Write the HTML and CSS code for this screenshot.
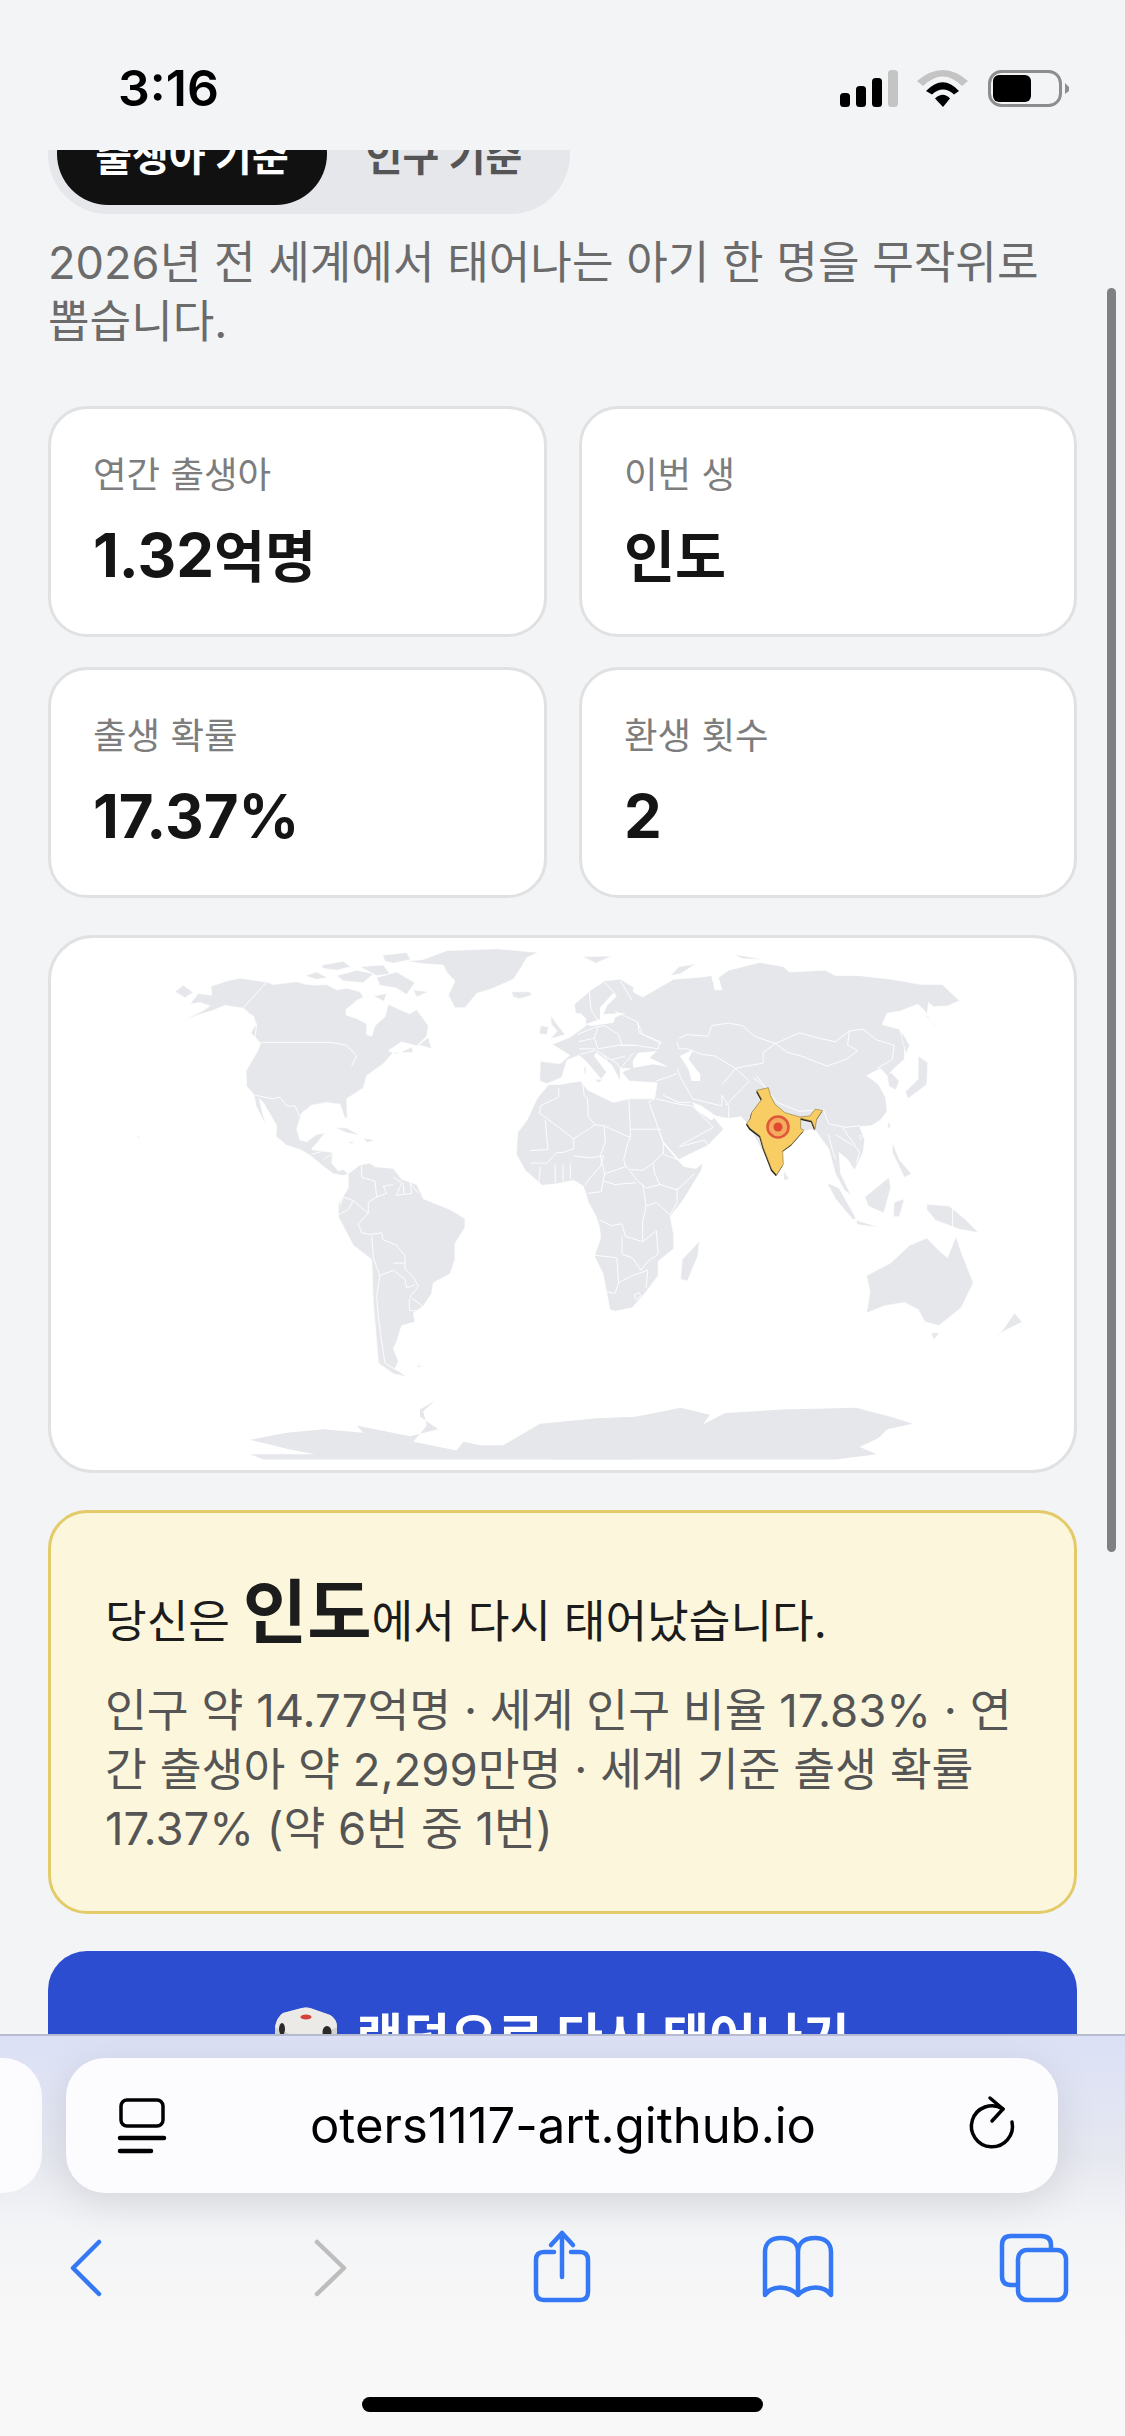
FILE: index.html
```html
<!DOCTYPE html>
<html lang="ko">

<head>
    <meta charset="UTF-8">
    <meta name="viewport" content="width=device-width, initial-scale=1.0">
    <title>랜덤 환생</title>
    <link rel="stylesheet" href="styles.css">
</head>

<body>
    <div class="phone">
        <!-- status bar -->
        <div class="statusbar">
            <span class="clock">3:16</span>
            <svg class="status-icons" viewBox="830 60 245 55">
                <rect x="840" y="93" width="10" height="14" rx="3.500" fill="#000" />
                <rect x="856" y="86" width="10" height="21" rx="3.500" fill="#000" />
                <rect x="872" y="78" width="10" height="29" rx="3.500" fill="#000" />
                <rect x="888" y="70" width="10" height="37" rx="3.500" fill="#c4c4c4" />
                <path d="M917 81Q943 59 968 81L962 86Q943 67 923 86Z" fill="#c4c4c4" />
                <path d="M926 91Q943 73.500 959 91L954 94.500Q943 84.500 932 94.500Z" fill="#000" />
                <path d="M935 98.500Q943 91 950 98.500L943 107Z" fill="#000" />
                <rect x="989.500" y="71.500" width="71" height="34" rx="12" fill="none" stroke="#8d8d8d" stroke-width="3" />
                <rect x="993" y="75" width="38" height="27" rx="6" fill="#000" />
                <path d="M1065 83L1069 87V91L1065 94Z" fill="#8d8d8d" />
            </svg>
        </div>

        <main class="content">
            <div class="tabs">
                <button class="tab active">출생아 기준</button>
                <button class="tab">인구 기준</button>
            </div>
            <p class="desc">2026년 전 세계에서 태어나는 아기 한 명을 무작위로 뽑습니다.</p>

            <div class="stats">
                <div class="stat">
                    <div class="stat-label">연간 출생아</div>
                    <div class="stat-value">1.32<span class="ko">억명</span></div>
                </div>
                <div class="stat">
                    <div class="stat-label">이번 생</div>
                    <div class="stat-value"><span class="ko">인도</span></div>
                </div>
                <div class="stat">
                    <div class="stat-label">출생 확률</div>
                    <div class="stat-value">17.37%</div>
                </div>
                <div class="stat">
                    <div class="stat-label">환생 횟수</div>
                    <div class="stat-value">2</div>
                </div>
            </div>

            <div class="map-card">
                <svg class="map" viewBox="51 937 1023 532">
                    <!-- americas, traced on a 3x / 2.8x grid -->
                    <g transform="translate(130 930) scale(.3333 .3571)">
                        <path class="land" d="M130 265L175 245 215 232 250 222 285 208 338 216 355 228 372 240 378 262 362 285 378 300 392 315 385 332 365 365 348 392 350 435 372 458 378 490 408 545 395 500 388 470 400 480 440 545 438 575 470 600 510 612 540 628 575 655 610 680 640 685 655 680 640 668 625 672 605 650 608 620 565 615 545 612 560 595 585 565 560 570 530 590 510 585 500 555 515 510 545 488 590 480 630 485 645 525 652 520 650 470 700 440 710 405 760 372 790 340 850 340 845 325 800 345 775 335 815 310 860 322 890 295 895 265 860 220 840 232 820 225 775 205 765 240 735 265 725 295 710 290 710 260 680 245 648 235 648 220 680 195 700 185 690 170 650 160 620 165 590 150 560 152 530 150 500 142 430 150 410 143 330 132 290 140 243 155 245 180 205 175 180 205 210 200 240 210 215 225Z" />
                        <path class="land" d="M135 170L160 152 190 172 165 187Z" />
                        <path class="land" d="M525 125L560 115 592 130 560 136Z" />
                        <path class="land" d="M575 95L640 85 662 100 620 110 580 105Z" />
                        <path class="land" d="M620 125L680 110 730 120 700 145 640 140Z" />
                        <path class="land" d="M690 100L760 95 780 120 740 125Z" />
                        <path class="land" d="M758 68L830 60 842 80 790 90 765 85Z" />
                        <path class="land" d="M740 130L800 115 855 145 830 178 800 160 750 152Z" />
                        <path class="land" d="M730 182L770 175 762 197Z" />
                        <path class="land" d="M850 165L895 170 860 185Z" />
                        <path class="land" d="M830 85L880 80 950 55 1100 50 1225 60 1190 75 1175 100 1150 135 1090 160 1040 175 1005 215 975 215 955 180 975 140 950 115 940 95 880 92Z" />
                        <path class="land" d="M1145 170L1200 170 1205 180 1170 190 1150 185Z" />
                        <path class="land" d="M1360 72L1445 70 1400 90Z" />
                        <path class="land" d="M865 320L895 298 905 330 880 322Z" />
                        <path class="land" d="M615 550L650 552 690 572 650 565Z" />
                        <path class="land" d="M700 580L735 585 712 593Z" />
                        <path class="land" d="M655 590L675 590 665 596Z" />
                        <path class="land" d="M22 572L30 578 24 582Z" />
                        <path class="land" d="M655 680L690 655 720 650 735 660 790 665 815 695 860 710 880 750 960 780 1005 805 1005 830 975 875 975 920 960 960 910 985 905 1015 880 1050 850 1070 855 1095 815 1105 800 1150 790 1170 805 1205 795 1225 830 1248 790 1240 745 1210 740 1150 730 1040 725 920 670 880 625 800 625 765 655 720Z" />
                        <path class="land" d="M858 1216L878 1216 868 1222Z" />
                        <path class="ice" d="M360 1425L470 1405 580 1395 700 1405 680 1385 840 1415 925 1395 870 1360 870 1340 915 1315 880 1345 890 1385 850 1430 980 1455 1000 1430 1050 1440 1120 1440 1230 1380 1400 1365 1510 1362 1510 1480 400 1480 360 1465 555 1465 480 1452Z" />
                        <path class="border" d="M410 143L340 215 380 260 375 300" />
                        <path class="border" d="M395 312L600 312 650 320 680 350 665 378" />
                        <path class="border" d="M375 460L430 470 450 465 470 490 495 490 510 520" />
                        <path class="border" d="M545 608L570 592M545 625L575 618M580 640L608 622" />
                        <path class="border" d="M695 655L695 690 735 700 740 745 770 735 760 715 790 710" />
                        <path class="border" d="M790 690L815 705 800 740 845 735 840 705 865 735M820 705L822 737" />
                        <path class="border" d="M740 745L715 760 715 790 685 820 695 845 720 850 755 845 760 865 800 880 825 910 825 945 850 970 865 995 840 1025 878 1050" />
                        <path class="border" d="M630 770L640 745 670 755 695 775 715 790M625 795L655 780 670 755" />
                        <path class="border" d="M725 855L730 915 750 965 790 950 825 975 830 1000 855 990M790 930L825 930" />
                        <path class="border" d="M750 965L740 1020 745 1080 755 1150 765 1210 800 1230" />
                        <path class="border" d="M838 1030L838 1062 870 1065 878 1050" />
                    </g>
                    <!-- old world -->
                    <g transform="translate(560 930) scale(.3444 .3571)">
                        <path class="land" d="M-59 420L-57 365 0 372 28 348 -10 325 -23 318 30 297 54 280 75 265 75 245 60 232 45 230 42 205 90 165 130 140 175 135 215 158 212 170 240 185 285 160 330 135 400 130 440 125 450 165 470 165 460 130 490 110 580 88 650 100 665 115 770 110 800 125 870 125 960 135 1050 150 1110 150 1160 195 1125 210 1085 212 1070 200 1065 240 1110 290 1085 265 1060 225 1040 205 985 225 950 230 935 262 985 275 1000 310 1000 360 975 380 960 395 985 420 975 445 955 435 950 405 930 385 890 405 905 415 925 430 945 465 950 505 930 530 905 545 870 548 885 585 880 620 855 670 835 640 810 620 815 680 845 740 825 725 800 680 780 610 765 590 740 555 705 560 640 620 630 680 590 620 545 540 525 520 490 525 452 518 410 490 385 480 395 500 425 520 440 530 447 522 475 555 430 600 345 640 300 590 270 510 258 478 275 470 282 425 200 420 180 395 205 385 175 385 175 420 150 375 105 340 100 350 135 395 120 415 75 365 55 348 20 362 5 410 -38 428Z" />
                        <path class="sea" d="M227 341L281 336 261 355 315 381 271 373 213 383 211 364Z" />
                        <path class="sea" d="M348 350L387 331 373 359 407 401 407 420 382 420 373 387Z" />
                        <path class="sea" d="M73 261L116 247 116 215 155 173 165 182 136 210 126 233 189 229 160 243 155 257 92 266Z" />
                        <path class="sea" d="M320 100L390 92 425 120 350 125 318 125Z" />
                        <path class="land" d="M-33 430L0 430 60 420 80 445 155 480 200 470 275 470 258 478 300 595 340 640 360 660 395 665 415 650 410 670 360 750 320 800 330 850 330 890 285 925 285 965 250 1010 210 1055 160 1065 145 1060 125 960 100 910 118 860 115 830 105 800 83 760 68 715 40 698 -9 708 -52 712 -101 670 -127 625 -123 565 -96 530 -67 470Z" />
                        <path class="land" d="M-28 235L-8 262 15 290 -28 302 -8 280 -25 262Z" />
                        <path class="land" d="M-57 265L-33 268 -38 290 -60 288Z" />
                        <path class="land" d="M405 868L400 910 370 980 350 975 355 920Z" />
                        <path class="land" d="M65 72L150 70 105 90Z" />
                        <path class="land" d="M320 125L345 100 395 92 350 120Z" />
                        <path class="land" d="M505 65L590 80 530 78Z" />
                        <path class="land" d="M70 380L76 380 74 402 70 400Z" />
                        <path class="land" d="M100 415L125 415 112 425Z" />
                        <path class="land" d="M650 670L665 695 650 698Z" />
                        <path class="land" d="M955 530L960 550 950 552Z" />
                        <path class="land" d="M870 572L882 575 872 585Z" />
                        <path class="land" d="M990 278L1015 320 1005 345 995 310Z" />
                        <path class="land" d="M1040 350L1068 368 1065 430 1010 470 1003 450 1040 415Z" />
                        <path class="land" d="M775 705L810 720 860 805 850 808 800 750Z" />
                        <path class="land" d="M860 810L930 830 862 822Z" />
                        <path class="land" d="M885 745L955 690 960 720 940 790 895 770Z" />
                        <path class="land" d="M970 760L1000 750 985 800 968 800Z" />
                        <path class="land" d="M965 590L985 640 1020 680 1000 690 965 620Z" />
                        <path class="land" d="M1065 765L1130 770 1180 810 1215 845 1160 835 1090 810 1065 780Z" />
                        <path class="land" d="M890 965L960 930 1015 880 1065 860 1095 890 1125 915 1150 855 1165 900 1200 985 1165 1055 1100 1105 1060 1095 1040 1060 1000 1040 940 1050 890 1070 900 1010Z" />
                        <path class="land" d="M1078 1125L1102 1125 1085 1145Z" />
                        <path class="land" d="M1320 1070L1342 1095 1290 1120 1215 1172 1280 1125Z" />
                        <path class="ice" d="M-20 1378L100 1365 220 1360 350 1335 435 1355 415 1382 480 1350 650 1340 860 1335 960 1360 1025 1380 950 1395 925 1420 870 1445 920 1465 800 1480 -20 1480Z" />
                        <path class="border" d="M-4 440L-4 465 -57 490 -59 510 40 582 102 543 127 545 195 575 205 575M-43 530L-35 612 -86 615M40 582L40 610 10 620 -9 620 -38 650 -86 650" />
                        <path class="border" d="M65 420L70 460 80 470 82 520 102 543M200 470L205 575 195 600 185 640 190 660 130 680M205 555L295 555" />
                        <path class="border" d="M40 630L88 635 127 630 117 660 88 690 73 712M127 545L132 590 117 630 130 680 125 700" />
                        <path class="border" d="M190 655L225 700 250 720 290 710 340 725 390 680M300 620L270 650 275 680 290 710M270 650L240 670 205 668M300 595L300 625 340 640" />
                        <path class="border" d="M80 735L120 730 125 700 160 710 220 705M240 710L250 770 240 815 240 870 190 855 180 820 150 825 115 810M250 770L280 760 320 795 340 760 340 720" />
                        <path class="border" d="M100 908L165 915 170 985 160 1015 135 1010M180 855L180 905 210 915 235 950 255 925 285 905 280 840 240 870M170 985L210 965 255 950 250 1000" />
                        <path class="border" d="M215 1020L230 1012 235 1022 222 1032Z" />
                        <path class="border" d="M-57 660L-62 710M-14 655L-14 705M9 655L9 700M30 650L30 695" />
                        <path class="border" d="M85 170L90 220 110 250M130 145L160 175M175 140L210 195" />
                        <path class="border" d="M160 225L225 255 230 285 290 310 285 330 220 320 180 320 170 290M225 255L240 290 295 315" />
                        <path class="border" d="M50 290L100 270 130 265 170 290M55 310L100 300 110 330 170 320 220 320M100 300L110 270M55 330L100 330 130 350 165 370 175 385 215 340M60 345L100 335M125 345L150 385M150 360L190 350" />
                        <path class="border" d="M345 300L370 290 430 295 440 265 490 258 530 265 565 295 625 315M340 310L345 330 370 330 410 345 450 350 510 385 530 380 590 370 590 340 625 315" />
                        <path class="border" d="M625 315L660 340 700 350 775 378 830 360 865 335 835 320 840 280 880 275 920 305 970 320 965 360 920 385M625 315L695 285 750 300 800 310 840 280" />
                        <path class="border" d="M340 385L350 410 385 470 470 490 470 460 490 490 490 525M470 430L510 385 550 420 480 490M280 420L340 400M300 460L345 480 380 480" />
                        <path class="border" d="M280 470L345 485 385 490 445 550 350 600M345 605L420 585 430 600" />
                        <path class="border" d="M560 410L600 440M570 405L630 480 695 505 765 500 780 540 830 550 870 545M780 570L790 610 800 640M820 550L870 620 860 650M800 570L850 600" />
                        <path class="border" d="M955 400L985 385M1140 775L1140 835" />
                    </g>
                    <!-- india, traced on a 3x grid -->
                    <g transform="translate(700 1040) scale(.3333)">
                        <path class="india-edge" d="M170 148L205 140 212 165 225 190 255 215 300 228 330 225 345 205 368 208 350 235 345 265 335 240 302 232 302 262 312 268 275 310 248 330 250 370 230 402 215 385 190 320 180 285 150 262 140 247 150 235 155 215 185 175Z" />
                        <path class="india" d="M170 148L205 140 212 165 225 190 255 215 300 228 330 225 345 205 368 208 350 235 345 265 335 240 302 232 302 262 312 268 275 310 248 330 250 370 230 402 215 385 190 320 180 285 150 262 140 247 150 235 155 215 185 175Z" />
                    </g>
                    <circle class="pin-ring" cx="778" cy="1126" r="10.5" />
                    <circle class="pin-dot" cx="778" cy="1126" r="4.5" />
                </svg>
            </div>

            <div class="result">
                <p class="result-title">당신은 <strong>인도</strong>에서 다시 태어났습니다.</p>
                <p class="result-desc">인구 약 14.77억명 · 세계 인구 비율 17.83% · 연간 출생아 약 2,299만명 · 세계 기준 출생 확률 17.37% (약 6번 중 1번)</p>
            </div>

            <button class="reborn">
                <svg class="dice" viewBox="0 0 62 62">
                    <path d="M0 20Q2 10 8 6L27 1Q31 0 35 1L55 8Q62 12 62 20V62H0Z" fill="#d3d2ce" />
                    <path d="M0 20Q2 10 8 6L27 1Q31 0 35 1L55 8Q62 12 62 20L38 32Q31 35 24 32Z" fill="#ebeae7" />
                    <ellipse cx="31" cy="10" rx="5.500" ry="2.500" fill="#d8403a" />
                    <ellipse cx="7" cy="22" rx="3" ry="6" fill="#2a2a2a" />
                    <ellipse cx="52" cy="25" rx="4.500" ry="6" fill="#2a2a2a" />
                </svg>
                랜덤으로 다시 태어나기
            </button>
        </main>

        <!-- safari bottom bar -->
        <div class="browserbar">
            <div class="address-row">
                <div class="prev-tab"></div>
                <div class="address">
                    <svg class="addr-left" viewBox="114 2090 62 72">
                        <rect x="121" y="2100" width="42" height="26" rx="6" fill="none" stroke="#000" stroke-width="3.500" />
                        <path d="M120 2138H164M120 2151H151" stroke="#000" stroke-width="4.500" stroke-linecap="round" fill="none" />
                    </svg>
                    <span class="url">oters1117-art.github.io</span>
                    <svg class="addr-right" viewBox="950 2090 74 72">
                        <path d="M1003 2109A20.500 20.500 0 1 0 1012 2122" fill="none" stroke="#000" stroke-width="3.500" stroke-linecap="round" />
                        <path d="M990 2098L1003 2109 992 2121" fill="none" stroke="#000" stroke-width="3.500" stroke-linecap="round" stroke-linejoin="round" />
                    </svg>
                </div>
            </div>
            <div class="toolbar">
                <svg class="tool" viewBox="46 2228 80 80">
                    <path class="tool-line" d="M99 2242L73 2268 99 2294" />
                </svg>
                <svg class="tool" viewBox="283 2228 80 80">
                    <path class="tool-line off" d="M317 2242L344 2268 317 2294" />
                </svg>
                <svg class="tool" viewBox="520 2228 80 80">
                    <path class="tool-line" d="M554 2252H544Q536 2252 536 2260V2292Q536 2300 544 2300H580Q588 2300 588 2292V2260Q588 2252 580 2252H571" />
                    <path class="tool-line" d="M562 2277V2233M551 2245L562 2233 573 2245" />
                </svg>
                <svg class="tool" viewBox="757 2228 80 80">
                    <path class="tool-line" d="M798 2295V2252C798 2243 792 2238 781 2238 771 2238 765 2243 765 2252V2295C772 2285 788 2285 798 2295 808 2285 824 2285 831 2295V2252C831 2243 825 2238 815 2238 804 2238 798 2243 798 2252" />
                </svg>
                <svg class="tool" viewBox="994 2228 80 80">
                    <path class="tool-line" d="M1017 2285H1011Q1002 2285 1002 2276V2245Q1002 2236 1011 2236H1041Q1051 2236 1051 2245V2250" />
                    <rect class="tool-line" x="1018" y="2250" width="48" height="50" rx="9" />
                </svg>
            </div>
            <div class="home-indicator"></div>
        </div>

        <div class="scrollbar"></div>
    </div>
</body>

</html>
```

FILE: styles.css
```css
* {
    margin: 0;
    padding: 0;
    box-sizing: border-box;
}

body {
    width: 1125px;
    height: 2436px;
    overflow: hidden;
    background: #f3f4f6;
    font-family: Inter, "Noto Sans CJK KR", sans-serif;
    color: #111;
}

.phone {
    position: relative;
    width: 1125px;
    height: 2436px;
    display: flex;
    flex-direction: column;
}

.statusbar {
    height: 150px;
    flex: none;
    display: flex;
    justify-content: space-between;
    align-items: flex-start;
    padding-left: 118px;
    padding-right: 50px;
    padding-top: 60px;
}

.clock {
    font-size: 50px;
    line-height: 56px;
    font-weight: 600;
    color: #000;
}

.status-icons {
    width: 245px;
    height: 55px;
}

/* page content */
.content {
    height: 1884px;
    flex: none;
    overflow: hidden;
    padding: 0 48px;
}

.tabs {
    display: flex;
    width: 522px;
    height: 120px;
    margin-top: -56px;
    padding: 9px;
    border-radius: 60px;
    background: #e5e7eb;
}

.tab {
    height: 102px;
    border: 0;
    border-radius: 51px;
    background: none;
    font: 700 40px Inter, "Noto Sans CJK KR", sans-serif;
    color: #555;
    width: 234px;
}

.tab.active {
    width: 270px;
    background: #111;
    color: #fff;
}

.desc {
    margin-top: 19px;
    font-size: 45.2px;
    line-height: 59px;
    color: #6b6b6b;
}

.stats {
    display: grid;
    grid-template-columns: 499px 498px;
    gap: 30px 32px;
    margin-top: 55px;
}

.stat {
    height: 231px;
    padding: 42px;
    background: #fff;
    border: 3px solid #e0e1e3;
    border-radius: 39px;
}

.stat-label {
    font-size: 36.5px;
    line-height: 48px;
    color: #7d7d7d;
}

.stat-value {
    margin-top: 20px;
    font-size: 60px;
    line-height: 72px;
    font-weight: 700;
    color: #151515;
}

.stat-value .ko {
    font-size: 55.5px;
}

.map-card {
    height: 538px;
    margin-top: 37px;
    background: #fff;
    border: 3px solid #e0e1e3;
    border-radius: 45px;
    overflow: hidden;
}

.map {
    display: block;
    width: 1023px;
    height: 532px;
}

.land {
    fill: #e5e7eb;
    stroke: #fff;
    stroke-width: 0.6;
    vector-effect: non-scaling-stroke;
}

.ice {
    fill: #e5e7eb;
}

.sea {
    fill: #fff;
}

.border {
    fill: none;
    stroke: #fff;
    stroke-width: 0.9;
    vector-effect: non-scaling-stroke;
}

.india {
    fill: #f8cd63;
    stroke: #8a7440;
    stroke-width: 0.6;
    vector-effect: non-scaling-stroke;
}

.india-edge {
    fill: #1c1c1c;
    transform: translate(-2px, 4px);
}

.pin-ring {
    fill: #f4ab5e;
    stroke: #e0573c;
    stroke-width: 2.6;
}

.pin-dot {
    fill: #df4a30;
}

.result {
    height: 404px;
    margin-top: 37px;
    padding: 52px 54px 0;
    background: #fcf7dc;
    border: 3px solid #e3cb6a;
    border-radius: 39px;
}

.result-title {
    font-size: 45.3px;
    line-height: 96px;
    color: #1c1c1c;
}

.result-title strong {
    font-size: 70px;
    font-weight: 700;
}

.result-desc {
    margin-top: 11px;
    font-size: 45.5px;
    line-height: 59px;
    color: #555;
}

.reborn {
    display: flex;
    justify-content: center;
    align-items: flex-start;
    gap: 19px;
    width: 100%;
    height: 150px;
    margin-top: 37px;
    padding-top: 56px;
    border: 0;
    border-radius: 39px;
    background: #2c4dcf;
    font: 700 51px/62px Inter, "Noto Sans CJK KR", sans-serif;
    color: #fff;
}

.dice {
    width: 62px;
    height: 62px;
    flex: none;
}

/* browser chrome */
.browserbar {
    flex: 1;
    border-top: 2px solid #b8bcd0;
    background: linear-gradient(180deg, #dbe0f6 0, #e6e8f0 120px, #f3f4f6 190px, #f8f8f8 300px);
}

.address-row {
    display: flex;
    gap: 24px;
    margin-top: 22px;
}

.prev-tab {
    width: 42px;
    height: 135px;
    background: #fcfcff;
    border-radius: 0 39px 39px 0;
}

.address {
    display: flex;
    align-items: center;
    width: 992px;
    height: 135px;
    padding: 0 34px 0 48px;
    background: #fcfcff;
    border-radius: 39px;
    box-shadow: 0 10px 40px rgba(0, 0, 0, 0.1);
}

.addr-left {
    width: 62px;
    height: 72px;
    flex: none;
}

.addr-right {
    width: 74px;
    height: 72px;
    flex: none;
}

.url {
    flex: 1;
    text-align: center;
    font-size: 49px;
    color: #000;
}

.toolbar {
    display: flex;
    justify-content: space-between;
    padding: 0 51px 0 46px;
    margin-top: 35px;
}

.tool {
    width: 80px;
    height: 80px;
}

.tool-line {
    fill: none;
    stroke: #3478f6;
    stroke-width: 4.5;
    stroke-linecap: round;
    stroke-linejoin: round;
}

.tool-line.off {
    stroke: #bdbdbd;
}

.home-indicator {
    width: 401px;
    height: 15px;
    margin: 89px 0 0 362px;
    border-radius: 8px;
    background: #000;
}

.scrollbar {
    position: absolute;
    top: 288px;
    left: 1107px;
    width: 9px;
    height: 1264px;
    border-radius: 5px;
    background: #808080;
}
```
